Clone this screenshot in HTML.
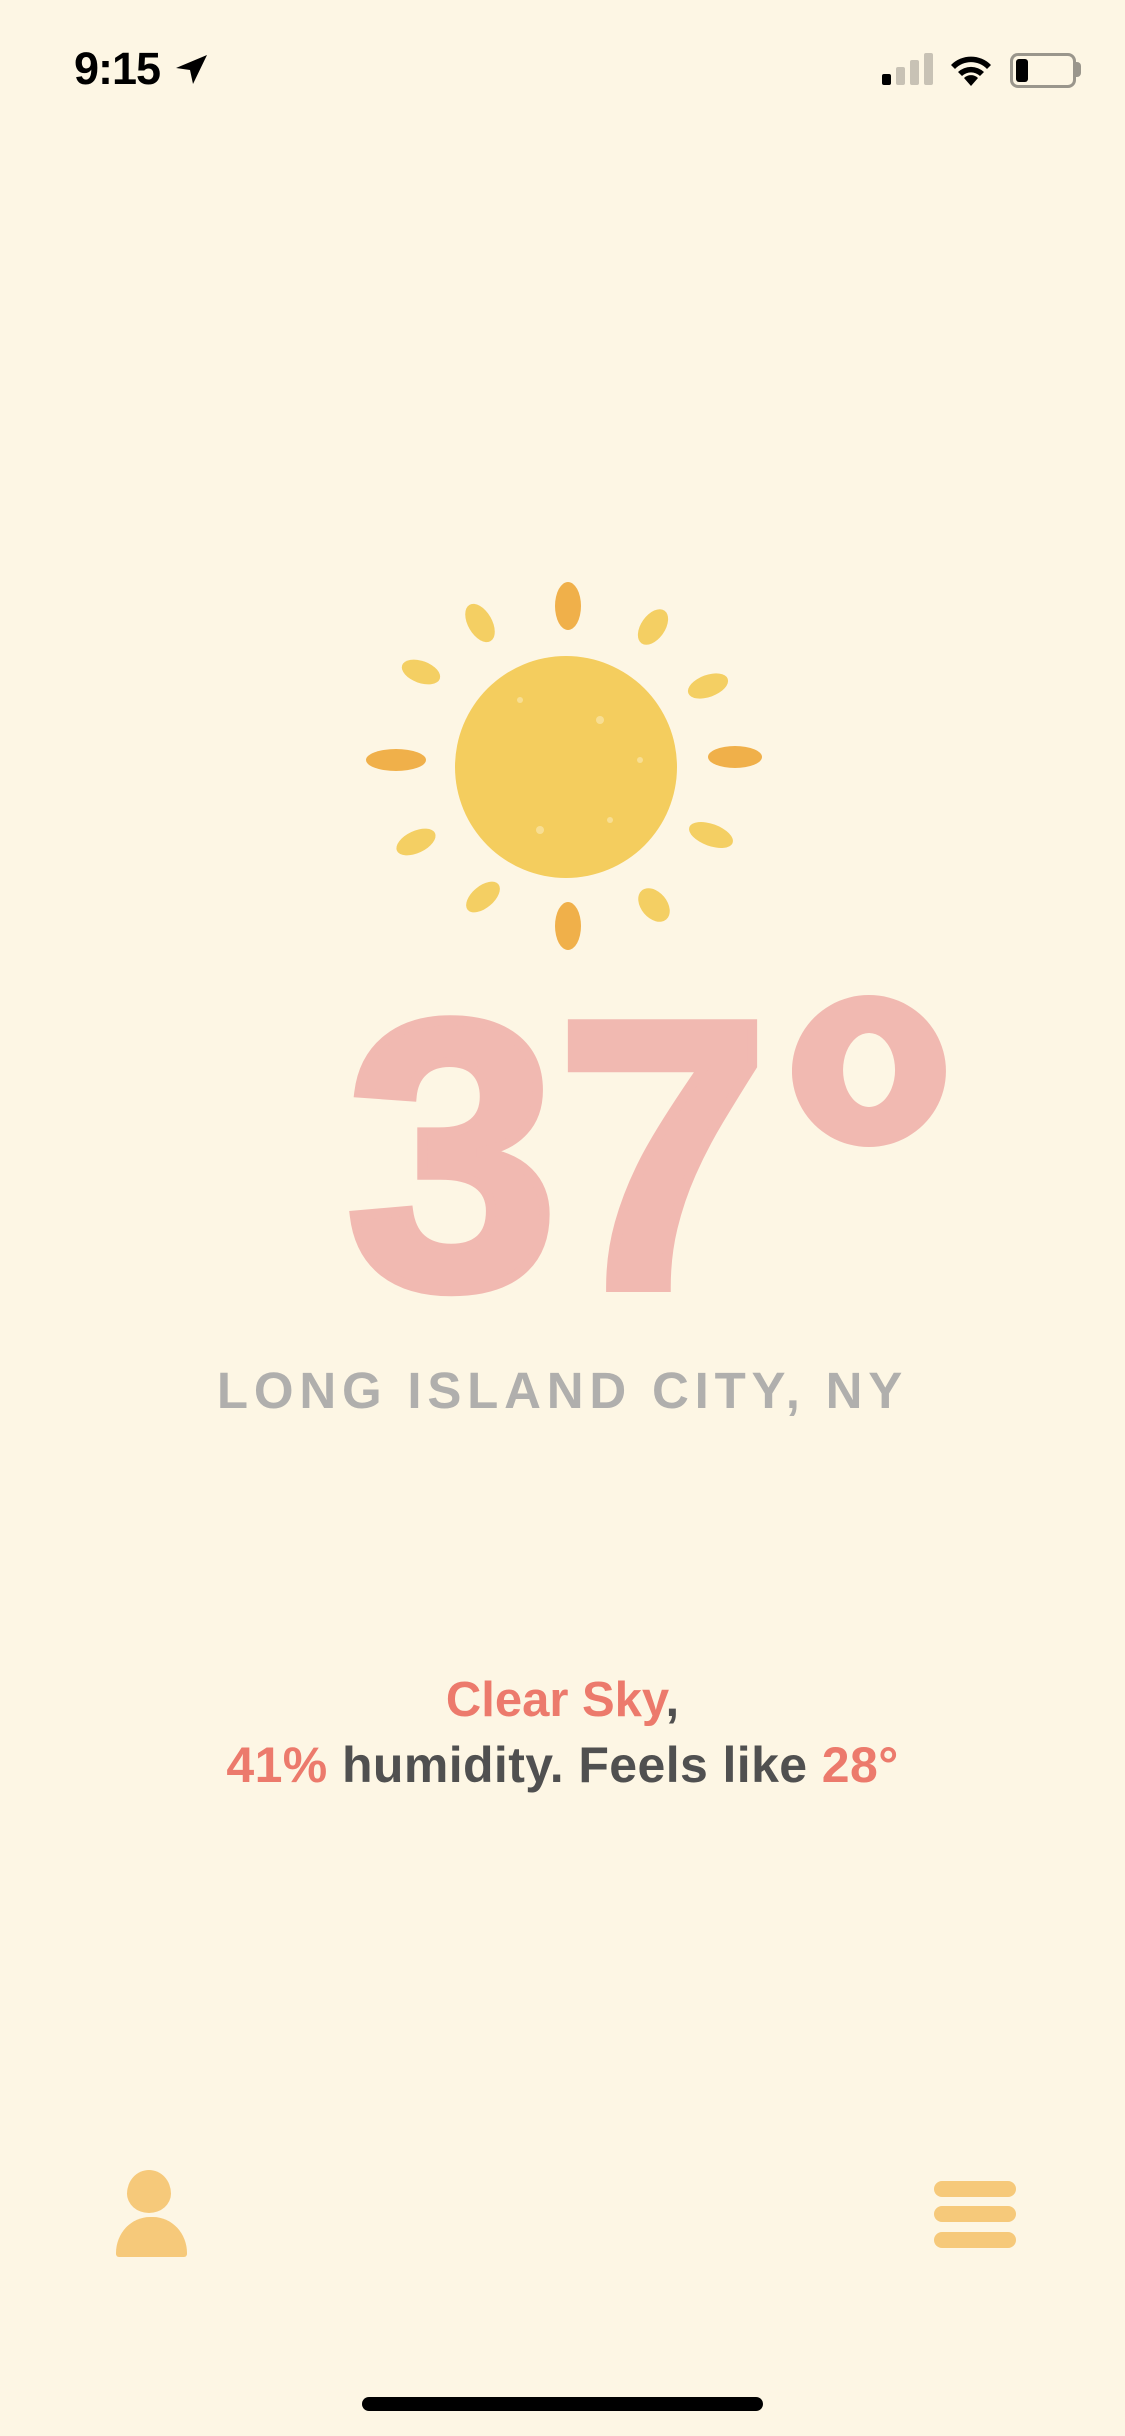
<!DOCTYPE html>
<html><head><meta charset="utf-8"><style>
html,body{margin:0;padding:0;}
body{width:1125px;height:2436px;background:#FDF6E4;position:relative;overflow:hidden;font-family:"Liberation Sans",sans-serif;}
.abs{position:absolute;}
.t{white-space:nowrap;}
</style></head><body>
<!-- status bar -->
<div class="abs t" style="left:74px;top:44px;font-size:45px;font-weight:bold;color:#000;letter-spacing:-1px;line-height:50px;">9:15</div>
<svg class="abs" style="left:174px;top:54px" width="36" height="32" viewBox="0 0 36 32"><path d="M33 1 L2 14 L16 16 L19 30 Z" fill="#000"/></svg>
<div class="abs" style="left:882px;top:74px;width:9px;height:11px;background:#000;border-radius:2px"></div>
<div class="abs" style="left:896px;top:67px;width:9px;height:18px;background:#C8C2B5;border-radius:2px"></div>
<div class="abs" style="left:910px;top:60px;width:9px;height:25px;background:#C8C2B5;border-radius:2px"></div>
<div class="abs" style="left:924px;top:53px;width:9px;height:32px;background:#C8C2B5;border-radius:2px"></div>
<svg class="abs" style="left:946px;top:51px" width="50" height="36" viewBox="0 0 50 36">
<path d="M25 35 L18 27 A10 10 0 0 1 32 27 Z" fill="#000"/>
<path d="M12 21 A19 19 0 0 1 38 21 L34 25 A13 13 0 0 0 16 25 Z" fill="#000"/>
<path d="M5 14 A28 28 0 0 1 45 14 L41 18 A22 22 0 0 0 9 18 Z" fill="#000"/>
</svg>
<div class="abs" style="left:1010px;top:53px;width:60px;height:29px;border:3px solid #9A968C;border-radius:8px"></div>
<div class="abs" style="left:1016px;top:59px;width:12px;height:23px;background:#000;border-radius:3px"></div>
<div class="abs" style="left:1076px;top:62px;width:5px;height:15px;background:#9A968C;border-radius:0 4px 4px 0"></div>

<!-- sun -->
<svg class="abs" style="left:0;top:0" width="1125" height="1000" viewBox="0 0 1125 1000">
<circle cx="566" cy="767" r="111" fill="#F4CD5E"/>
<g fill="#FAE6A8" opacity="0.7">
<circle cx="520" cy="700" r="3"/><circle cx="600" cy="720" r="4"/><circle cx="540" cy="830" r="4"/><circle cx="610" cy="820" r="3"/><circle cx="640" cy="760" r="3"/>
</g>
<ellipse cx="568" cy="606" rx="13" ry="24" fill="#F0B04A"/>
<ellipse cx="568" cy="926" rx="13" ry="24" fill="#F0B04A"/>
<ellipse cx="396" cy="760" rx="30" ry="11" fill="#F0B04A"/>
<ellipse cx="735" cy="757" rx="27" ry="11" fill="#F0B04A"/>
<ellipse cx="480" cy="623" rx="12" ry="21" fill="#F4CF63" transform="rotate(-30 480 623)"/>
<ellipse cx="653" cy="627" rx="12" ry="20" fill="#F4CF63" transform="rotate(35 653 627)"/>
<ellipse cx="421" cy="672" rx="20" ry="11" fill="#F4CF63" transform="rotate(20 421 672)"/>
<ellipse cx="708" cy="686" rx="21" ry="11" fill="#F4CF63" transform="rotate(-20 708 686)"/>
<ellipse cx="416" cy="842" rx="21" ry="11" fill="#F4CF63" transform="rotate(-25 416 842)"/>
<ellipse cx="711" cy="835" rx="23" ry="11" fill="#F4CF63" transform="rotate(20 711 835)"/>
<ellipse cx="483" cy="897" rx="11" ry="20" fill="#F4CF63" transform="rotate(50 483 897)"/>
<ellipse cx="654" cy="905" rx="13" ry="19" fill="#F4CF63" transform="rotate(-40 654 905)"/>
</svg>

<!-- temperature -->
<div class="abs t" style="left:346px;top:935px;font-size:382px;font-weight:bold;color:#F1B9B1;-webkit-text-stroke:10px #F1B9B1;line-height:440px;letter-spacing:-2px;">37</div>
<svg class="abs" style="left:792px;top:995px" width="154" height="152" viewBox="0 0 154 152"><path fill-rule="evenodd" fill="#F1B9B1" d="M77 0 A77 76 0 1 1 76.9 0 Z M77 38 A26 37 0 1 0 77.1 38 Z"/></svg>

<!-- city -->
<div class="abs t" style="left:0;width:1125px;text-align:center;top:1362px;font-size:51px;font-weight:bold;color:#B0AFAD;letter-spacing:5.8px;line-height:58px;box-sizing:border-box;">LONG ISLAND CITY, NY</div>

<!-- description -->
<div class="abs t" style="left:0;width:1125px;text-align:center;top:1672px;font-size:49px;font-weight:bold;line-height:56px;"><span style="color:#EC7A6C">Clear Sky</span><span style="color:#505050">,</span></div>
<div class="abs t" style="left:0;width:1125px;text-align:center;top:1736px;font-size:50px;font-weight:bold;line-height:58px;color:#505050;letter-spacing:0.4px;"><span style="color:#EC7A6C">41%</span> humidity. Feels like <span style="color:#EC7A6C">28°</span></div>

<!-- bottom icons -->
<div class="abs" style="left:127px;top:2170px;width:44px;height:43px;background:#F6C97A;border-radius:50% 50% 50% 50%/55% 55% 45% 45%"></div>
<div class="abs" style="left:116px;top:2217px;width:71px;height:40px;background:#F6C97A;border-radius:34px 34px 3px 3px/36px 36px 3px 3px"></div>
<div class="abs" style="left:934px;top:2181px;width:82px;height:16px;background:#F6C97A;border-radius:8px"></div>
<div class="abs" style="left:934px;top:2206px;width:82px;height:16px;background:#F6C97A;border-radius:8px"></div>
<div class="abs" style="left:934px;top:2232px;width:82px;height:16px;background:#F6C97A;border-radius:8px"></div>

<!-- home indicator -->
<div class="abs" style="left:362px;top:2397px;width:401px;height:14px;background:#000;border-radius:7px"></div>
</body></html>
